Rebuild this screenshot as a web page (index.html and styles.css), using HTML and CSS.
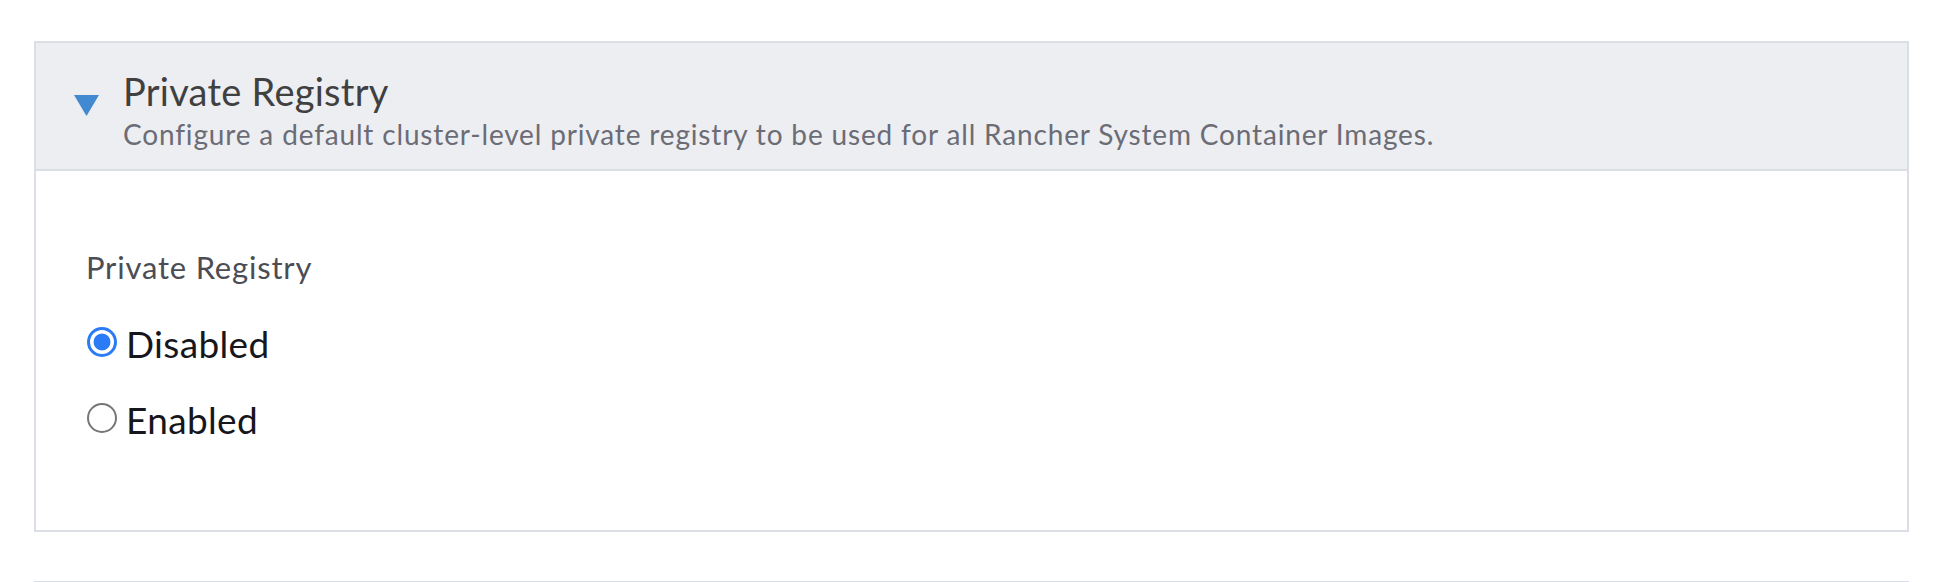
FILE: index.html
```html
<!DOCTYPE html>
<html lang="en">
<head>
<meta charset="utf-8">
<title>Private Registry</title>
<link rel="stylesheet" href="styles.css">
</head>
<body>
<div class="page">
  <section class="accordion">
    <div class="acc-header">
      <svg class="caret" width="25" height="21" viewBox="0 0 25 21" aria-hidden="true"><polygon points="0,0 25,0 12.5,21" fill="#4189d0"/></svg>
      <div class="acc-titles">
        <h2 class="acc-title">Private Registry</h2>
        <p class="acc-desc">Configure a default cluster-level private registry to be used for all Rancher System Container Images.</p>
      </div>
    </div>
    <div class="acc-body">
      <div class="field-label">Private Registry</div>
      <label class="radio-row"><input type="radio" name="reg" checked><span>Disabled</span></label>
      <label class="radio-row"><input type="radio" name="reg"><span>Enabled</span></label>
    </div>
  </section>
  <section class="accordion next"></section>
</div>
</body>
</html>
```
FILE: styles.css
```css
html, body {
  margin: 0;
  padding: 0;
  background: #ffffff;
}
body {
  font-family: Lato, "Open Sans", "Liberation Sans", sans-serif;
  overflow: hidden;
}
.page {
  padding: 41px 45px 0 34px;
}
.accordion {
  border: 2px solid #dcdee6;
}
.accordion.next {
  margin-top: 49px;
  height: 60px;
}
.acc-header {
  display: flex;
  align-items: flex-start;
  background: #edeef2;
  border-bottom: 2px solid #dcdee6;
  padding: 27px 0 19px 38px;
}
.caret {
  flex: none;
  margin-top: 25px;
  margin-right: 24px;
}
.acc-titles {
  display: flex;
  flex-direction: column;
  gap: 6px;
}
.acc-title {
  margin: 0;
  font-size: 38px;
  font-weight: 400;
  line-height: 43px;
  letter-spacing: 0.25px;
  color: #404040;
}
.acc-desc {
  margin: 0;
  font-size: 28px;
  line-height: 31px;
  letter-spacing: 0.84px;
  color: #6b6c75;
}
.acc-body {
  padding: 78px 0 88px 50px;
  display: flex;
  flex-direction: column;
  align-items: flex-start;
}
.field-label {
  font-size: 31px;
  line-height: 36px;
  letter-spacing: 0.8px;
  color: #4c4d54;
  margin-bottom: 37px;
}
.radio-row {
  display: flex;
  align-items: center;
  gap: 9px;
  font-size: 37px;
  line-height: 44px;
  letter-spacing: 0.35px;
  color: #16171c;
}
.radio-row + .radio-row {
  margin-top: 32px;
}
.radio-row input {
  appearance: none;
  -webkit-appearance: none;
  margin: 0 0 4px 1px;
  width: 30px;
  height: 30px;
  border-radius: 50%;
  border: 2px solid #767676;
  background: #fff;
  box-sizing: border-box;
}
.radio-row input:checked {
  border: 3px solid #2b7bf6;
  background: radial-gradient(circle, #2b7bf6 0 8px, #ffffff 8.8px);
}
```
